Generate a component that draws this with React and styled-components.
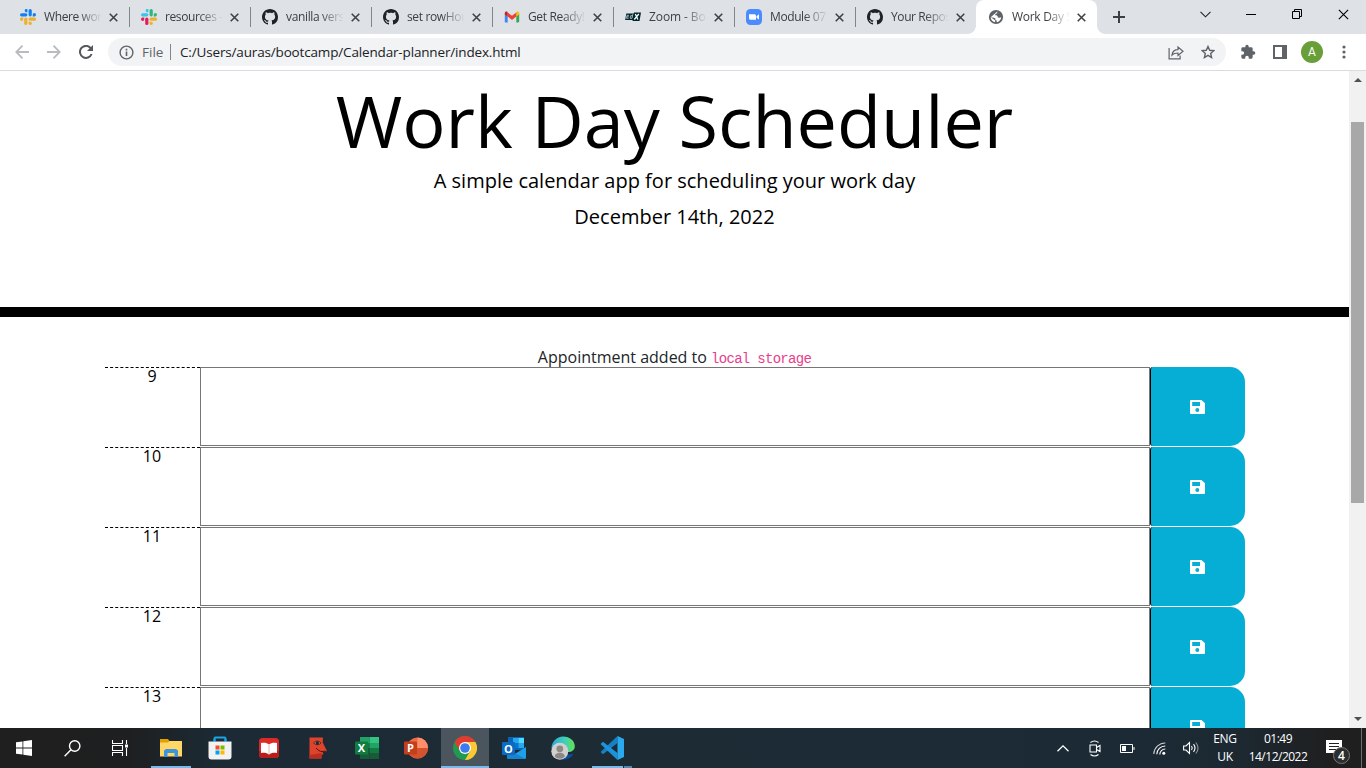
import React from 'react';
import styled, { createGlobalStyle } from 'styled-components';

const Global = createGlobalStyle`
  * { box-sizing: border-box; }
  html, body { margin: 0; padding: 0; overflow: hidden; background: #fff; }
  svg { display: block; flex: none; }
`;

const ui = `"Open Sans", "Noto Sans", sans-serif`;

const Screen = styled.div`
  width: 1366px;
  height: 768px;
  display: flex;
  flex-direction: column;
  overflow: hidden;
  font-family: ${ui};
`;

/* Browser tabs */
const TabStrip = styled.div`
  height: 34px;
  flex: none;
  display: flex;
  background: #dee1e6;
  padding-left: 8px;
`;
const Tab = styled.div`
  position: relative;
  width: 121px;
  height: 34px;
  flex: none;
  display: flex;
  align-items: center;
  padding-left: 12px;
  background: ${(p) => (p.$active ? '#fff' : 'transparent')};
  border-radius: 8px 8px 0 0;
  &::after {
    content: '';
    position: absolute;
    right: -1px;
    top: 7px;
    width: 1px;
    height: 20px;
    background: ${(p) => (p.$line ? '#80868b' : 'transparent')};
  }
`;
const TabFoot = styled.i`
  position: absolute;
  bottom: 0;
  ${(p) => p.$side}: -8px;
  width: 8px;
  height: 8px;
  background: radial-gradient(circle at ${(p) => (p.$side === 'left' ? '0 0' : '100% 0')}, #dee1e6 7.5px, #fff 8px);
`;
const TabTitle = styled.span`
  margin-left: 8px;
  width: 57px;
  height: 20px;
  line-height: 20px;
  font-size: 12px;
  letter-spacing: ${(p) => p.$ls || 0}px;
  color: #3c4043;
  white-space: nowrap;
  overflow: hidden;
  mask-image: linear-gradient(90deg, #000 34px, transparent 58px);
`;
const TabClose = styled.span`
  margin-left: 8px;
`;
const NewTab = styled.div`
  width: 28px;
  display: grid;
  place-items: center;
  margin-left: 8px;
`;
const WindowButtons = styled.div`
  margin-left: auto;
  display: flex;
  height: 28px;
`;
const WindowButton = styled.div`
  width: 46px;
  display: grid;
  place-items: center;
`;

/* Address bar */
const Toolbar = styled.div`
  height: 37px;
  flex: none;
  display: flex;
  align-items: center;
  padding: 0 6px;
  background: #fff;
  border-bottom: 1px solid #d9dbde;
`;
const ToolSlot = styled.div`
  width: 32px;
  height: 28px;
  flex: none;
  display: grid;
  place-items: center;
`;
const Omnibox = styled.div`
  width: 1118px;
  height: 28px;
  margin: 0 6px;
  display: flex;
  align-items: center;
  padding: 0 2px 0 11px;
  border-radius: 14px;
  background: #f1f3f4;
  font-size: 14px;
`;
const Scheme = styled.span`
  width: 28px;
  margin-left: 8px;
  color: #5f6368;
  font-size: 13.5px;
  line-height: 20px;
`;
const Rule = styled.span`
  width: 1px;
  height: 16px;
  background: #80868b;
`;
const Address = styled.span`
  margin-left: 9px;
  margin-right: auto;
  color: #202124;
  font-size: 13.5px;
  line-height: 20px;
  letter-spacing: -0.16px;
`;
const Avatar = styled.span`
  width: 22px;
  height: 22px;
  border-radius: 50%;
  background: #689f38;
  color: #fff;
  font: 12px/22px Roboto, sans-serif;
  text-align: center;
`;

/* Page */
const Viewport = styled.div`
  height: 657px;
  flex: none;
  display: flex;
  overflow: hidden;
`;
const Page = styled.main`
  width: 1349px;
  height: 657px;
  overflow: hidden;
  text-align: center;
  color: #000;
  background: #fff;
`;
const Header = styled.header`
  height: 246px;
  padding-top: 13px;
  border-bottom: 10px solid #000;
`;
const Title = styled.h1`
  margin: 0 0 10px;
  font-size: 72px;
  font-weight: 400;
  line-height: 72px;
`;
const Lead = styled.p`
  margin: 0 0 6px;
  font-size: 20px;
  line-height: 30px;
`;
const Notice = styled.p`
  margin: 28px 0 0;
  height: 22px;
  font-size: 16px;
  line-height: 24px;
  color: #212529;
  white-space: nowrap;
`;
const Code = styled.code`
  font-family: "Liberation Mono", monospace;
  font-size: 14px;
  letter-spacing: -0.7px;
  color: #e83e8c;
`;
const Planner = styled.section`
  width: 1140px;
  margin: 0 auto 0 105px;
`;
const HourRow = styled.div`
  height: 80px;
  display: flex;
`;
const Hour = styled.div`
  width: 95px;
  padding-right: 1px;
  border-top: 1px dashed #000;
  font-size: 16px;
  line-height: 17px;
  color: #000;
`;
const Slot = styled.div`
  width: 950px;
  height: 79px;
  border: 1px solid #767676;
`;
const SaveButton = styled.button`
  width: 95px;
  height: 79px;
  padding: 0 2px 0 0;
  border: 0;
  border-left: 1px solid #000;
  border-radius: 3px 15px 15px 3px;
  background: #06aed5;
  display: grid;
  place-items: center;
`;
const ScrollBar = styled.div`
  width: 17px;
  display: flex;
  flex-direction: column;
  align-items: center;
  background: #f1f1f1;
`;
const ScrollArrow = styled.div`
  height: ${(p) => p.$h}px;
  width: 17px;
  display: flex;
  justify-content: center;
  padding-top: 7px;
`;
const Thumb = styled.div`
  width: 13px;
  height: 381px;
  margin: 34px 0 auto;
  background: #a8a8a8;
`;

/* Taskbar */
const Taskbar = styled.footer`
  height: 40px;
  flex: none;
  display: flex;
  color: #fff;
  background: linear-gradient(90deg, #1f1f1f 0, #1e1f20 130px, #1b2a34 215px, #1d2b35 640px, #1b2a35 1150px, #1c2932 1230px, #1f1f20 1330px, #1f1f1f 100%);
`;
const TaskItem = styled.div`
  position: relative;
  width: ${(p) => p.$w || 49}px;
  margin-left: ${(p) => p.$gap || 0}px;
  height: 40px;
  display: grid;
  place-items: center;
  background: ${(p) => (p.$active ? '#4a555d' : 'transparent')};
`;
const Underline = styled.i`
  position: absolute;
  bottom: 0;
  left: ${(p) => p.$x}px;
  width: ${(p) => p.$w}px;
  height: 2px;
  background: ${(p) => p.$c || '#76b9ed'};
`;
const Tray = styled.div`
  margin-left: auto;
  display: flex;
  align-items: center;
`;
const TrayIcon = styled.div`
  width: 32px;
  display: grid;
  place-items: center;
`;
const TrayText = styled.div`
  width: ${(p) => p.$w}px;
  font-size: 12px;
  line-height: 18px;
  padding-bottom: 1px;
  text-align: center;
  letter-spacing: ${(p) => p.$ls}px;
  white-space: nowrap;
`;
const Notify = styled.div`
  position: relative;
  width: 48px;
  height: 40px;
  padding: 12px 0 0 13px;
`;
const Badge = styled.span`
  position: absolute;
  left: 20px;
  top: 19px;
  width: 17px;
  height: 17px;
  border-radius: 50%;
  border: 1px solid #777;
  background: #2b2d2e;
  font-size: 12px;
  font-weight: 600;
  line-height: 15px;
  text-align: center;
`;
const ShowDesktop = styled.div`
  width: 5px;
  height: 40px;
  border-left: 1px solid #6d6d6d;
`;

const Slack = ({ blue }) => {
  const [a, b, c, d] = blue ? ['#1280f5', '#1280f5', '#ecb22e', '#ecb22e'] : ['#36c5f0', '#2eb67d', '#ecb22e', '#e01e5a'];
  return (
    <svg width="16" height="16" viewBox="0 0 16 16">
      <g fill={a}><rect x="0" y="4.2" width="7.4" height="3.2" rx="1.6" /><path d="M7.4 0v3.3H5.8A1.65 1.65 0 1 1 7.4 0z" /></g>
      <g fill={b}><rect x="8.6" y="0" width="3.2" height="7.4" rx="1.6" /><path d="M12.7 7.4V5.8a1.65 1.65 0 1 1 1.6 1.6z" /></g>
      <g fill={c}><rect x="8.6" y="8.6" width="7.4" height="3.2" rx="1.6" /><path d="M8.6 12.7h1.6a1.65 1.65 0 1 1-1.6 1.6z" /></g>
      <g fill={d}><rect x="4.2" y="8.6" width="3.2" height="7.4" rx="1.6" /><path d="M3.3 8.6v1.6a1.65 1.65 0 1 1-1.6-1.6z" /></g>
    </svg>
  );
};
const GitHub = () => (
  <svg width="16" height="16" viewBox="0 0 16 16" fill="#1f2328"><path d="M8 0C3.58 0 0 3.58 0 8c0 3.54 2.29 6.53 5.47 7.59.4.07.55-.17.55-.38 0-.19-.01-.82-.01-1.49-2.01.37-2.53-.49-2.69-.94-.09-.23-.48-.94-.82-1.13-.28-.15-.68-.52-.01-.53.63-.01 1.08.58 1.23.82.72 1.21 1.87.87 2.33.66.07-.52.28-.87.51-1.07-1.78-.2-3.64-.89-3.64-3.95 0-.87.31-1.59.82-2.15-.08-.2-.36-1.02.08-2.12 0 0 .67-.21 2.2.82.64-.18 1.32-.27 2-.27s1.36.09 2 .27c1.53-1.04 2.2-.82 2.2-.82.44 1.1.16 1.92.08 2.12.51.56.82 1.27.82 2.15 0 3.07-1.87 3.75-3.65 3.95.29.25.54.73.54 1.48 0 1.07-.01 1.93-.01 2.2 0 .21.15.46.55.38A8.01 8.01 0 0 0 16 8c0-4.42-3.58-8-8-8z" /></svg>
);
const Gmail = () => (
  <svg width="16" height="16" viewBox="0 0 16 16"><path d="M1 13.5h2.7V7.3L.8 4.5v8.2c0 .4.2.8.2.8z" fill="#4285f4" /><path d="M12.3 13.5H14c.7 0 1.2-.5 1.2-1.2V4.5l-2.9 2.8z" fill="#34a853" /><path d="M12.3 3.4v4.2l2.9-2.2V4c0-1.5-1.5-2-2.5-1.2z" fill="#fbbc04" /><path d="M3.7 7.6V3.4L8 6.7l4.3-3.3v4.2L8 10.9z" fill="#ea4335" /><path d="M.8 4v1.4l2.9 2.2V3.4l-.4-.6C2.3 2 .8 2.5.8 4z" fill="#c5221f" /></svg>
);
const EdxIcon = () => (
  <svg width="16" height="16" viewBox="0 0 16 16"><path d="M1.300 4.500H9l-1.200 6.500H.2zM9 3.500h7L14.500 12H7.500z" fill="#02262b" /><path d="M10.300 5l2.600 5.500M13.800 5l-4.500 5.500" stroke="#fff" fill="none" strokeWidth="1.300" /><path d="M1.800 7.800h2M4 6.300H2L1.500 9.300H3.500M7.800 5.200L7 9.300H5.200l.4-2.600h1.800" stroke="#c4cfd1" fill="none" strokeWidth=".8" /></svg>
);
const ZoomIcon = () => (
  <svg width="16" height="16" viewBox="0 0 16 16"><rect width="16" height="16" rx="4.5" fill="#4a8cff" /><path d="M3 5.2h5.500a1.500 1.500 0 0 1 1.500 1.500v4H4.500A1.500 1.500 0 0 1 3 9.200zM10.500 7.200L13 5.300v5.300l-2.500-1.800z" fill="#fff" /></svg>
);
const Globe = () => (
  <svg width="16" height="16" viewBox="0 0 16 16"><circle cx="8" cy="8" r="7.100" fill="#5f6368" /><path d="M9.300 2.400C9.600 4 8.600 4.700 7.300 4.900V6.300H8.600L9.800 7.600v1l1.800.1 1.700-.5c-.3 2.600-2.200 4.600-4.600 5V11.600L7.400 10.900V9.500L6 8.800 2.700 8.300c.1 2.400 1.800 4.400 4.100 5l.6-1.500L6 10.500 2.700 8.300z" fill="#fff" /></svg>
);
const Cross = ({ size = 9, w = 1.7, color = '#3c4043' }) => (
  <svg width={size} height={size} viewBox="0 0 10 10" stroke={color} strokeWidth={w}><path d="M.8.8l8.400 8.400M9.200.8L.8 9.200" /></svg>
);

const tabs = [
  { title: 'Where work', icon: <Slack blue />, ls: -0.4 },
  { title: 'resources - T', icon: <Slack />, ls: -0.4 },
  { title: 'vanilla versi', icon: <GitHub />, ls: -0.35 },
  { title: 'set rowHour', icon: <GitHub />, ls: -0.35 },
  { title: 'Get Ready! Y', icon: <Gmail />, ls: -0.35 },
  { title: 'Zoom - Boo', icon: <EdxIcon />, ls: -0.1 },
  { title: 'Module 07:', icon: <ZoomIcon />, ls: -0.4 },
  { title: 'Your Reposi', icon: <GitHub />, ls: -0.4 },
  { title: 'Work Day S', icon: <Globe />, active: true, ls: -0.3 },
];

const Save = () => (
  <svg width="15" height="14" viewBox="0 0 15 14"><path fillRule="evenodd" fill="#fff" d="M1 0h10.500L15 3.300V13a1 1 0 0 1-1 1H1a1 1 0 0 1-1-1V1a1 1 0 0 1 1-1zM2.200 2v4h7.800V2zM7.300 8a2 2 0 1 0 0 4 2 2 0 0 0 0-4z" /></svg>
);

const Explorer = () => (
  <svg width="22" height="18" viewBox="0 0 22 18"><path d="M0 0h8l1.500 2H21v5H0z" fill="#e0a000" /><path d="M0 3.500h8L9.500 2H22v15.500H0z" fill="#ffd767" /><path d="M4 18v-6.500L6 10h10l2 1.500V18h-3.500v-4h-7v4z" fill="#3b94dc" /></svg>
);
const Store = () => (
  <svg width="24" height="24" viewBox="0 0 24 24"><path d="M6.500 7V2.500a1 1 0 0 1 1-1h9a1 1 0 0 1 1 1V7" fill="none" stroke="#1ba6e8" strokeWidth="2" /><path d="M.5 5.500h23v15a3 3 0 0 1-3 3h-17a3 3 0 0 1-3-3z" fill="#f2f2f2" /><path d="M6.500 5.500V3M17.500 5.500V3" stroke="#1ba6e8" strokeWidth="2" /><path d="M7.500 9.500h4v4h-4z" fill="#f25022" /><path d="M12.500 9.500h4v4h-4z" fill="#7fba00" /><path d="M7.500 14.500h4v4h-4z" fill="#00a4ef" /><path d="M12.500 14.500h4v4h-4z" fill="#ffb900" /></svg>
);
const Book = () => (
  <svg width="20" height="20" viewBox="0 0 20 20"><rect width="20" height="20" rx="3.5" fill="#de2a27" /><path d="M0 13h20v3.500a3.500 3.500 0 0 1-3.500 3.500h-13A3.500 3.500 0 0 1 0 16.500z" fill="#b81d1d" /><path d="M2 5c3-.6 6-.4 8 1.500C12 4.600 15 4.400 18 5v10c-3-.5-6-.3-8 1.500C8 14.700 5 14.500 2 15z" fill="#fff" /><path d="M10 6.500v10" stroke="#ddb9b9" /></svg>
);
const Face = () => (
  <svg width="20" height="22" viewBox="0 0 20 22"><path d="M1.500.5H15l-.3 5L19 14l-4.500 1 1 2-2 1v3.500h-12z" fill="#e0432c" /><path d="M1.500 18l12-2v5.500h-12z" fill="#b92e1e" /><path d="M5.500 6q3.500-4 7.500 0-3.800 3.500-7.500 0z" fill="#a58b80" stroke="#49180f" strokeWidth=".8" /><circle cx="9.300" cy="6" r="1.700" fill="#1b2a34" /><path d="M8 11q4 5 9.500 3" stroke="#4b130c" fill="none" /></svg>
);
const IconLetter = styled.text`
  font: 700 ${(p) => p.$size || 11}px "Open Sans", sans-serif;
  fill: #fff;
  text-anchor: middle;
`;
const Excel = () => (
  <svg width="24" height="22" viewBox="0 0 24 22"><path d="M5 0h9.500v7H5z" fill="#21a366" /><path d="M14.500 0H24v6h-9.500z" fill="#33c481" /><path d="M5 6h9.500v5H5z" fill="#107c41" /><path d="M14.500 6H24v5h-9.500z" fill="#21a366" /><path d="M5 11h9.500v11H5z" fill="#185c37" /><path d="M14.500 11H24v5h-9.500z" fill="#107c41" /><path d="M14.500 16H24v6h-9.500z" fill="#185c37" /><rect y="4.500" width="13" height="13" rx="1" fill="#107c41" /><IconLetter x="6.500" y="15">X</IconLetter></svg>
);
const PowerPoint = () => (
  <svg width="24" height="22" viewBox="0 0 24 22"><circle cx="13.500" cy="11" r="10.500" fill="#ed6c47" /><path d="M13.500.5A10.500 10.500 0 0 1 24 11H13.500z" fill="#ff8f6b" /><path d="M3 11h21a10.500 10.500 0 0 1-21 0z" fill="#d35230" /><rect y="4.500" width="13" height="13" rx="1" fill="#c43e1c" /><IconLetter x="6.500" y="15">P</IconLetter></svg>
);
const Chrome = () => (
  <svg width="24" height="24" viewBox="0 0 24 24"><circle cx="12" cy="12" r="12" fill="#1e9b50" /><path d="M1.600 6A12 12 0 0 1 22.400 6H12L6.800 15z" fill="#e33b2e" /><path d="M22.400 6A12 12 0 0 1 12 24l5.200-9L12 6z" fill="#fcc934" /><circle cx="12" cy="12" r="6" fill="#fff" /><circle cx="12" cy="12" r="4.800" fill="#3a7cec" /></svg>
);
const Outlook = () => (
  <svg width="24" height="22" viewBox="0 0 24 22"><path d="M6 0h16v13H6z" fill="#0a64b5" /><path d="M11 1h5.500v5H11z" fill="#28a8ea" /><path d="M16.500 1H22v5h-5.500z" fill="#50d9ff" /><path d="M11 6h5.500v5H11z" fill="#0078d4" /><path d="M16.500 6H22v5h-5.500z" fill="#28a8ea" /><path d="M5 22L24 10v10.500a1.500 1.500 0 0 1-1.500 1.500z" fill="#1da0e8" /><path d="M5 12l18.500 10H6.500A1.500 1.500 0 0 1 5 20.500z" fill="#1583cf" /><rect y="5" width="13" height="13" rx="1" fill="#0a6ac4" /><IconLetter x="6.500" y="15.500">O</IconLetter></svg>
);
const Edge = () => (
  <svg width="24" height="24" viewBox="0 0 24 24">
    <defs><linearGradient id="edge" x1="0" x2="1"><stop offset="0" stopColor="#2da7e0" /><stop offset=".6" stopColor="#40d1b4" /><stop offset="1" stopColor="#67e04f" /></linearGradient></defs>
    <path d="M.5 12A11.700 11.700 0 0 1 12 .5C19 .5 23.800 5 23.800 10c0 4-3 6-6.500 6H12L3 17z" fill="url(#edge)" /><path d="M2 17c2 5 8 8 14 6 3-.8 5-2.700 6.500-5.500C18 20 13 18 12 14z" fill="#0d4f9f" /><circle cx="8.800" cy="15.200" r="8.500" fill="#d2d0ce" /><circle cx="8.800" cy="12.800" r="3.400" fill="#8b8886" /><path d="M3.800 20.500c0-5 10-5 10 0-2.500 3-7.500 3-10 0z" fill="#8b8886" /></svg>
);
const VSCode = () => (
  <svg width="24" height="24" viewBox="0 0 24 24"><path d="M17.500 0v7L3 18.200.5 16z" fill="#1580c4" /><path d="M17.500 24v-7L3 5.800.5 8z" fill="#1b94db" /><path d="M17.500 0L24 3v18l-6.500 3z" fill="#2aa9ee" /></svg>
);

export default function App() {
  return (
    <>
      <Global />
      <Screen>
        <TabStrip>
          {tabs.map((t, i) => (
            <Tab key={t.title} $active={t.active} $line={i < 7}>
              {t.active && <><TabFoot $side="left" /><TabFoot $side="right" /></>}
              {t.icon}
              <TabTitle $ls={t.ls}>{t.title}</TabTitle>
              <TabClose><Cross /></TabClose>
            </Tab>
          ))}
          <NewTab><svg width="12" height="12" stroke="#3c4043" strokeWidth="2"><path d="M6 0v12M0 6h12" /></svg></NewTab>
          <WindowButtons>
            <WindowButton><svg width="11" height="7" fill="none" stroke="#222" strokeWidth="1.100"><path d="M.5.800l5 5 5-5" /></svg></WindowButton>
            <WindowButton><svg width="10" height="1"><path d="M0 0h10v1H0z" /></svg></WindowButton>
            <WindowButton><svg width="10" height="10" fill="none" stroke="#000"><path d="M.5 2.500h7v7h-7zM2.500 2.500v-2h7v7h-2" /></svg></WindowButton>
            <WindowButton><Cross size={11} w={1} color="#000" /></WindowButton>
          </WindowButtons>
        </TabStrip>

        <Toolbar>
          <ToolSlot><svg width="14" height="14" fill="none" stroke="#b9bbbe" strokeWidth="1.800"><path d="M14 7H1.500M7.500.7L1.300 7l6.200 6.300" /></svg></ToolSlot>
          <ToolSlot><svg width="14" height="14" fill="none" stroke="#b9bbbe" strokeWidth="1.800"><path d="M0 7h12.500M6.500.7L12.700 7l-6.200 6.300" /></svg></ToolSlot>
          <ToolSlot><svg width="14" height="14" viewBox="0 0 14 14"><path d="M12.600 9A6 6 0 1 1 11.300 2.700L13 4.500" fill="none" stroke="#54585d" strokeWidth="2" /><path d="M14 0v6H8z" fill="#54585d" /></svg></ToolSlot>
          <Omnibox>
            <svg width="15" height="15" viewBox="0 0 15 15"><circle cx="7.500" cy="7.500" r="6.400" fill="none" stroke="#5f6368" strokeWidth="1.400" /><path d="M6.700 6.600h1.600V11H6.700zM6.700 3.800h1.600v1.600H6.700z" fill="#5f6368" /></svg>
            <Scheme>File</Scheme>
            <Rule />
            <Address>C:/Users/auras/bootcamp/Calendar-planner/index.html</Address>
            <ToolSlot><svg width="16" height="15" viewBox="0 0 16 15" fill="none" stroke="#5f6368" strokeWidth="1.200"><path d="M1.100 3v10.900h11V10.500M4 10c.5-4 3-5.300 6-5.300V2l5 4.300-5 4.200V8C7.500 8 5.500 8.300 4 10z" /></svg></ToolSlot>
            <ToolSlot><svg width="14" height="14" viewBox="0 0 14 14" fill="none" stroke="#5f6368" strokeWidth="1.400"><path d="M7 1.500l1.700 3.800 4.100.4-3.100 2.700.9 4.100L7 10.400l-3.600 2.100.9-4.100-3.100-2.700 4.100-.4z" /></svg></ToolSlot>
          </Omnibox>
          <ToolSlot><svg width="16" height="16" viewBox="0 0 24 24" fill="#5f6368"><path d="M20.500 11H19V7a2 2 0 0 0-2-2h-4V3.500a2.500 2.500 0 0 0-5 0V5H4a2 2 0 0 0-2 2v3.800h1.500a2.700 2.700 0 0 1 0 5.400H2V20a2 2 0 0 0 2 2h3.800v-1.500a2.700 2.700 0 0 1 5.400 0V22H17a2 2 0 0 0 2-2v-4h1.500a2.500 2.500 0 0 0 0-5z" /></svg></ToolSlot>
          <ToolSlot><svg width="14" height="14"><path d="M1 1h12v12H1z" fill="#fff" stroke="#5f6368" strokeWidth="2" /><path d="M9 0h5v14H9z" fill="#5f6368" /></svg></ToolSlot>
          <ToolSlot><Avatar>A</Avatar></ToolSlot>
          <ToolSlot><svg width="4" height="14" fill="#5f6368"><circle cx="2" cy="2" r="1.600" /><circle cx="2" cy="7" r="1.600" /><circle cx="2" cy="12" r="1.600" /></svg></ToolSlot>
        </Toolbar>

        <Viewport>
          <Page>
            <Header>
              <Title>Work Day Scheduler</Title>
              <Lead>A simple calendar app for scheduling your work day</Lead>
              <Lead>December 14th, 2022</Lead>
            </Header>
            <Notice>Appointment added to <Code>local storage</Code></Notice>
            <Planner>
              {[9, 10, 11, 12, 13].map((h) => (
                <HourRow key={h}>
                  <Hour>{h}</Hour>
                  <Slot />
                  <SaveButton><Save /></SaveButton>
                </HourRow>
              ))}
            </Planner>
          </Page>
          <ScrollBar>
            <ScrollArrow $h={17}><svg width="8" height="4" fill="#505050"><path d="M0 4l4-4 4 4z" /></svg></ScrollArrow>
            <Thumb />
            <ScrollArrow $h={18}><svg width="8" height="4" fill="#505050"><path d="M0 0l4 4 4-4z" /></svg></ScrollArrow>
          </ScrollBar>
        </Viewport>

        <Taskbar>
          <TaskItem $w={48}><svg width="16" height="16" fill="#fff"><path d="M0 2.300L6.500 1.400V7.600H0zM7.300 1.300L16 0v7.600H7.300zM0 8.400h6.500v6.200L0 13.700zM7.300 8.400H16V16l-8.700-1.300z" /></svg></TaskItem>
          <TaskItem $w={48}><svg width="17" height="17" fill="none" stroke="#fff" strokeWidth="1.400"><circle cx="10.700" cy="6" r="5.200" /><path d="M7 9.700L.6 16.200" /></svg></TaskItem>
          <TaskItem $w={48}><svg width="17" height="16" fill="none" stroke="#fff" strokeWidth="1.100"><path d="M.5 0v3.500h10V0M.5 16v-3.500h10V16M.5 5.500h10v5H.5zM14.500 0v4M14.500 8v8" /><path d="M13 4.500h3v3h-3z" fill="#fff" stroke="none" /></svg></TaskItem>
          <TaskItem $gap={3} $w={48}><Explorer /><Underline $x={4} $w={40} /></TaskItem>
          <TaskItem><Store /></TaskItem>
          <TaskItem><Book /></TaskItem>
          <TaskItem><Face /></TaskItem>
          <TaskItem><Excel /></TaskItem>
          <TaskItem><PowerPoint /></TaskItem>
          <TaskItem $active $w={48} $gap={1}><Chrome /><Underline $x={0} $w={48} /></TaskItem>
          <TaskItem><Outlook /></TaskItem>
          <TaskItem><Edge /></TaskItem>
          <TaskItem><VSCode /><Underline $x={5} $w={31} /><Underline $x={37} $w={8} $c="#5586ab" /></TaskItem>
          <Tray>
            <TrayIcon><svg width="12" height="7" fill="none" stroke="#fff" strokeWidth="1.300"><path d="M.5 6.300L6 .900l5.500 5.400" /></svg></TrayIcon>
            <TrayIcon><svg width="12" height="17" fill="none" stroke="#fff" strokeWidth="1.100"><path d="M1 5h6.500v7H1zM7.500 7.500l3.500-2v6l-3.500-2M1.500 2.500q4-3 8 0M1.500 14.500q4 3 8 0" /></svg></TrayIcon>
            <TrayIcon><svg width="15" height="9" fill="none" stroke="#fff"><path d="M.5.500h12v8H.5zM14 3v3" /><path d="M2 2h4v5H2z" fill="#fff" stroke="none" /></svg></TrayIcon>
            <TrayIcon><svg width="13" height="13" fill="none" stroke="#fff" strokeWidth="1.100"><path d="M.8 12A11.500 11.500 0 0 1 12.300 1" opacity=".75" /><path d="M3.800 12.300A8.400 8.400 0 0 1 12.300 4M6.800 12.500A5.500 5.500 0 0 1 12.300 7" /><circle cx="10.800" cy="11.300" r="1.500" fill="#fff" stroke="none" /></svg></TrayIcon>
            <TrayIcon><svg width="17" height="14" fill="none" stroke="#fff" strokeWidth="1.100"><path d="M.6 5h2.400l3.500-3.500v11L3 9H.6zM8.500 5q1.500 2 0 4M10.500 3.200q3 3.800 0 7.600" /><path d="M12.800 1.500q4.500 5.500 0 11" opacity=".5" /></svg></TrayIcon>
            <TrayText $w={36} $ls={-0.3}>ENG<br />UK</TrayText>
            <TrayText $w={70} $ls={-0.5}>01:49<br />14/12/2022</TrayText>
            <Notify><svg width="16" height="16"><path d="M0 0h16v13h-5v3l-3-3H0z" fill="#fff" /><path d="M3 3.500h10M3 6.500h10M3 9.500h7" stroke="#1f1f1f" /></svg><Badge>4</Badge></Notify>
            <ShowDesktop />
          </Tray>
        </Taskbar>
      </Screen>
    </>
  );
}
